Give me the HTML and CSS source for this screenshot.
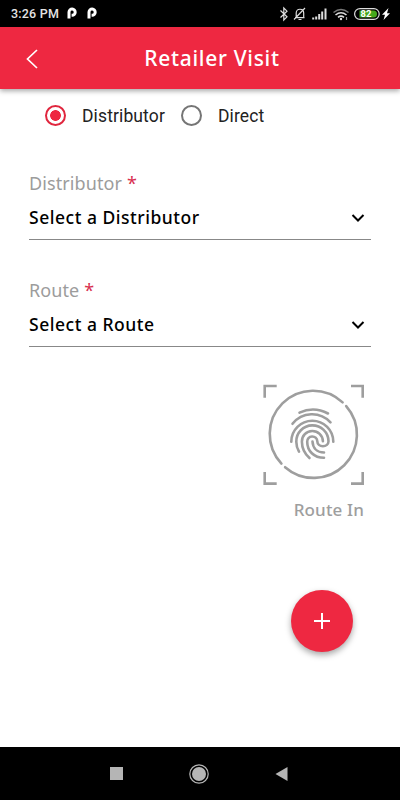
FILE: index.html
```html
<!DOCTYPE html>
<html lang="en">
<head>
  <meta charset="UTF-8">
  <meta name="viewport" content="width=device-width, initial-scale=1.0">
  <title>Retailer Visit</title>
  <link rel="stylesheet" href="styles.css">
</head>
<body>
  <div class="statusbar">
    <span class="time">3:26 PM</span>
    <svg class="p-icon" width="10" height="13" viewBox="0 0 10 13"><path d="M2 11.5V5a3.1 3.1 0 1 1 3.1 3.3H4.6" fill="none" stroke="#fff" stroke-width="3"/></svg>
    <svg class="p-icon" width="10" height="13" viewBox="0 0 10 13"><path d="M2 11.5V5a3.1 3.1 0 1 1 3.1 3.3H4.6" fill="none" stroke="#fff" stroke-width="3"/></svg>
    <svg class="system" width="122" height="20" viewBox="0 0 122 20" fill="none" stroke="#ddd" stroke-width="1.2">
      <!-- bluetooth -->
      <path d="M2.5 6.5l6.5 6.3L5.8 16V4L9 7.2l-6.5 6.3"/>
      <!-- muted bell -->
      <path d="M17 13.7h9.5M18.2 13.5V9c0-5 7.5-5 7.500 0v4.500M20.500 15.500h3M16 15.500L27 4"/>
      <!-- signal -->
      <path d="M35.200 15.500v-2M38.200 15.500v-3M41.200 15.500V10M44.200 15.500V7.500M47.500 15.500v-11" stroke-width="2"/>
      <!-- wifi -->
      <path d="M55.500 8.500q7.500-6 15 0" stroke="#777" stroke-width="1.5"/>
      <path d="M57.500 11q5.500-4.500 11 0M60 13.300q3-2.400 6 0" stroke-width="1.6"/>
      <circle cx="63" cy="15" r="1.2" fill="#ddd" stroke="none"/>
      <path d="M68.500 13v3" stroke="#999"/>
      <!-- battery -->
      <rect x="76.6" y="4.6" width="24.6" height="10.8" rx="5.4"/>
      <path d="M81.500 6.500h14a3.500 3.500 0 0 1 0 7h-14z" fill="#46a81c" stroke="none"/>
      <text class="battery" x="82.5" y="13">82</text>
      <path d="M110.500 4l-6.500 6.800h3L105.500 16l6.500-6.800h-3z" fill="#fff" stroke="none"/>
    </svg>
  </div>

  <header class="appbar">
    <svg class="back" width="14" height="22" viewBox="0 0 14 22"><path d="M12 2L2.500 11l9.500 9" fill="none" stroke="#fff" stroke-width="1.7"/></svg>
    <h1>Retailer Visit</h1>
  </header>

  <main>
    <div class="radios">
      <label class="radio"><span class="dot checked"></span>Distributor</label>
      <label class="radio"><span class="dot"></span>Direct</label>
    </div>

    <div class="field">
      <div class="label">Distributor <span class="required">*</span></div>
      <div class="select">
        <span>Select a Distributor</span>
        <svg width="14" height="10" viewBox="0 0 14 10"><path d="M1.5 2L7 7.5 12.5 2" fill="none" stroke="#000" stroke-width="2"/></svg>
      </div>
    </div>

    <div class="field">
      <div class="label">Route <span class="required">*</span></div>
      <div class="select">
        <span>Select a Route</span>
        <svg width="14" height="10" viewBox="0 0 14 10"><path d="M1.5 2L7 7.5 12.5 2" fill="none" stroke="#000" stroke-width="2"/></svg>
      </div>
    </div>

    <div class="route-in">
      <svg width="102" height="102" viewBox="0 0 102 102" fill="none" stroke="#9e9e9e" stroke-width="2.6">
        <path d="M1.7 13.8V2h12M88 2h11.7v11.8M1.7 88v11.6h12M88 99.6h11.7V88"/>
        <g stroke-linecap="round">
          <path d="M18.4 79.6A43.3 43.3 0 0 1 79.6 18.4M83.2 22.1A43.3 43.3 0 0 1 22.1 83.2"/>
          <path d="M36.5 28.6Q51 22 65 29.5"/>
          <path d="M29.5 39.8C39 27.5 57 27 67.5 38.3"/>
          <path d="M28.3 57.7A21 21 0 0 1 70.3 57.7"/>
          <path d="M36 67.7Q33.3 63 33.3 57.7A16 16 0 0 1 65.5 57.2A5.6 5 0 0 1 54.3 57.2A5.05 5 0 0 0 44.2 57.7C44.2 67 51 73.8 61 73.8"/>
          <path d="M46.5 74C41 69 38.9 64 38.9 57.7A10.5 10.5 0 0 1 59.9 57.2"/>
          <path d="M49.5 57.5C49.8 64 54 68.5 61 68.5"/>
        </g>
      </svg>
      <span>Route In</span>
    </div>

    <button class="add" aria-label="Add">
      <svg width="18" height="18" viewBox="0 0 18 18"><path d="M9 1v16M1 9h16" stroke="#fff" stroke-width="2"/></svg>
    </button>
  </main>

  <nav class="navbar">
    <svg width="13" height="13"><rect width="13" height="13" fill="#b5b5b5"/></svg>
    <svg width="20" height="20" viewBox="0 0 20 20"><circle cx="10" cy="10" r="9.2" fill="none" stroke="#b5b5b5" stroke-width="1.2"/><circle cx="10" cy="10" r="7" fill="#b5b5b5"/></svg>
    <svg width="13" height="14" viewBox="0 0 13 14"><path d="M12.5 0v14L.5 7z" fill="#b5b5b5"/></svg>
  </nav>
</body>
</html>
```

FILE: styles.css
```css
* {
  box-sizing: border-box;
}
body {
  margin: 0;
  height: 800px;
  display: flex;
  flex-direction: column;
  overflow: hidden;
  background-color: #fff;
  font-family: "Noto Sans", sans-serif;
}
svg {
  display: block;
  flex: none;
}
.statusbar {
  height: 27px;
  display: flex;
  align-items: center;
  padding: 0 0 0 11px;
  background-color: #000;
  color: #e4e4e4;
}
.time {
  width: 56px;
  font: 500 12.5px Roboto, sans-serif;
  letter-spacing: 0.2px;
  white-space: nowrap;
}
.p-icon {
  margin-right: 10px;
}
.system {
  margin-left: auto;
}
.battery {
  font: bold 9.5px Roboto, sans-serif;
  fill: #fff;
  stroke: none;
}
.appbar {
  height: 62px;
  display: grid;
  grid-template-columns: 40px 1fr 16px;
  align-items: center;
  padding: 0 25px;
  background-color: #ee2841;
  box-shadow: 0 2px 5px rgba(0, 0, 0, 0.35);
  color: #fff;
}
.back {
  margin-top: 2px;
}
h1 {
  margin: 0;
  font-size: 21px;
  font-weight: 500;
  line-height: 28px;
  letter-spacing: 0.7px;
  text-align: center;
  white-space: nowrap;
}
main {
  flex: 1;
  display: flex;
  flex-direction: column;
  padding: 14px 29px 0;
}
.radios {
  display: flex;
  gap: 16px;
  padding-left: 16px;
}
.radio {
  display: flex;
  align-items: center;
  gap: 16px;
  height: 25px;
  font: 17.5px Roboto, sans-serif;
  letter-spacing: 0.12px;
  color: #222;
}
.dot {
  width: 21px;
  height: 21px;
  border: 2px solid #757575;
  border-radius: 50%;
}
.dot.checked {
  border-color: #e0263e;
  background: radial-gradient(circle, #ee2841 5px, #fff 5.7px);
}
.field {
  padding-top: 42px;
}
.field + .field {
  padding-top: 37px;
}
.label {
  height: 26px;
  font-size: 18px;
  line-height: 26px;
  letter-spacing: 0.1px;
  color: #9c9c9c;
}
.required {
  color: #d8304f;
}
.select {
  height: 44px;
  display: flex;
  justify-content: space-between;
  padding: 8px 6px 0 0;
  border-bottom: 1px solid #888;
  font-size: 17.5px;
  font-weight: 500;
  line-height: 26px;
  letter-spacing: 0.52px;
  color: #000;
}
.select svg {
  margin-top: 9px;
}
.route-in {
  align-self: flex-end;
  display: flex;
  flex-direction: column;
  align-items: flex-end;
  margin: 37px 6px 0 0;
  color: #9e9e9e;
  font-size: 17px;
  font-weight: 500;
}
.route-in span {
  margin: 12px 1px 0 0;
  line-height: 24px;
  letter-spacing: 0.15px;
}
.add {
  align-self: flex-end;
  display: flex;
  align-items: center;
  justify-content: center;
  width: 62px;
  height: 62px;
  margin: 68px 18px 0 0;
  padding: 0;
  border: none;
  border-radius: 50%;
  background-color: #ee2841;
  box-shadow: 0 3px 6px rgba(0, 0, 0, 0.35);
}
.navbar {
  height: 53px;
  display: flex;
  align-items: center;
  justify-content: space-between;
  padding: 0 112px 0 110px;
  background-color: #000;
}
```
